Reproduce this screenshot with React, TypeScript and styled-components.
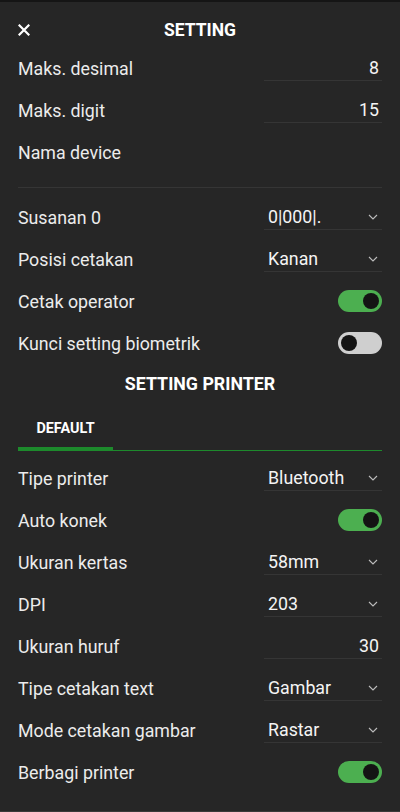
import React from "react";
import styled, { createGlobalStyle } from "styled-components";

const Global = createGlobalStyle`
  html, body { margin: 0; padding: 0; background: #262626; }
  body { font-family: Roboto, "Noto Sans", sans-serif; color: #eeeeee; }
  * { box-sizing: border-box; }
`;

const Screen = styled.div`
  width: 400px;
  height: 812px;
  background: #262626;
  border-top: 2px solid #151515;
  border-bottom: 1px solid #3a3a3a;
  overflow: hidden;
`;

const Header = styled.div`
  height: 45px;
  padding: 10px 18px 0;
  display: grid;
  grid-template-columns: 1fr auto 1fr;
  align-items: center;
`;

const CloseBtn = styled.div`
  display: flex;
  align-items: center;
  justify-self: start;
`;

const Title = styled.div`
  font-size: 17.5px;
  font-weight: 700;
  color: #ffffff;
  text-align: center;
`;

const Body = styled.div`
  padding: 0 18px;
`;

const Row = styled.div`
  height: 42px;
  display: flex;
  align-items: center;
  justify-content: space-between;
`;

const Label = styled.div`
  font-size: 17.8px;
  color: #ececec;
`;

const Field = styled.div`
  width: 118px;
  height: 26px;
  border-bottom: 1px solid #353535;
  display: flex;
  align-items: center;
  justify-content: space-between;
  padding: 0 3px 0 4px;
  font-size: 17.8px;
  color: #f4f4f4;
`;

const NumberValue = styled.div`
  margin-left: auto;
`;

const Chevron = styled.svg`
  width: 10px;
  height: 6px;
  margin-right: 1px;
`;

const NameBlock = styled.div`
  display: flex;
  flex-direction: column;
`;

const NameInput = styled.div`
  height: 15px;
  border-bottom: 1px solid #353535;
`;

const Spacer = styled.div<{ $h: number }>`
  height: ${(p) => p.$h}px;
`;

const Track = styled.div<{ $on: boolean }>`
  width: 44px;
  height: 22px;
  border-radius: 11px;
  background: ${(p) => (p.$on ? "#4caf50" : "#cfcfcf")};
  display: flex;
  align-items: center;
  justify-content: ${(p) => (p.$on ? "flex-end" : "flex-start")};
  padding: 0 3px;
`;

const Thumb = styled.div`
  width: 16px;
  height: 16px;
  border-radius: 50%;
  background: #141414;
`;

const SectionTitle = styled.div`
  height: 38px;
  display: flex;
  align-items: center;
  justify-content: center;
  font-size: 17.8px;
  font-weight: 700;
  color: #ffffff;
`;

const TabBar = styled.div`
  display: flex;
  box-shadow: inset 0 -1px 0 #1d8a2c;
`;

const Tab = styled.div<{ $active?: boolean }>`
  width: 95px;
  padding: 17px 0 8px;
  line-height: 20px;
  text-align: center;
  font-size: 14.4px;
  font-weight: 700;
  color: #ffffff;
  border-bottom: 4px solid ${(p) => (p.$active ? "#1d8a2c" : "transparent")};
`;

const Switch = ({ on }: { on: boolean }) => (
  <Track $on={on}>
    <Thumb />
  </Track>
);

const NumberRow = ({ label, value }: { label: string; value: string }) => (
  <Row>
    <Label>{label}</Label>
    <Field>
      <NumberValue>{value}</NumberValue>
    </Field>
  </Row>
);

const SelectRow = ({ label, value }: { label: string; value: string }) => (
  <Row>
    <Label>{label}</Label>
    <Field>
      <span>{value}</span>
      <Chevron viewBox="0 0 10 6">
        <polyline points="1,1 5,5 9,1" fill="none" stroke="#bdbdbd" strokeWidth="1.1" />
      </Chevron>
    </Field>
  </Row>
);

const SwitchRow = ({ label, on }: { label: string; on: boolean }) => (
  <Row>
    <Label>{label}</Label>
    <Switch on={on} />
  </Row>
);

export default function App() {
  return (
    <>
      <Global />
      <Screen>
        <Header>
          <CloseBtn>
            <svg width="12" height="12" viewBox="0 0 12 12">
              <path d="M1.5 1.5 L10.5 10.5 M10.5 1.5 L1.5 10.5" stroke="#ffffff" strokeWidth="2.2" strokeLinecap="square" />
            </svg>
          </CloseBtn>
          <Title>SETTING</Title>
          <div />
        </Header>
        <Body>
          <NumberRow label="Maks. desimal" value="8" />
          <NumberRow label="Maks. digit" value="15" />
          <NameBlock>
            <Row>
              <Label>Nama device</Label>
            </Row>
            <NameInput />
          </NameBlock>
          <Spacer $h={8} />
          <SelectRow label="Susanan 0" value="0|000|." />
          <SelectRow label="Posisi cetakan" value="Kanan" />
          <SwitchRow label="Cetak operator" on={true} />
          <SwitchRow label="Kunci setting biometrik" on={false} />
          <SectionTitle>SETTING PRINTER</SectionTitle>
          <TabBar>
            <Tab $active>DEFAULT</Tab>
          </TabBar>
          <Spacer $h={6} />
          <SelectRow label="Tipe printer" value="Bluetooth" />
          <SwitchRow label="Auto konek" on={true} />
          <SelectRow label="Ukuran kertas" value="58mm" />
          <SelectRow label="DPI" value="203" />
          <NumberRow label="Ukuran huruf" value="30" />
          <SelectRow label="Tipe cetakan text" value="Gambar" />
          <SelectRow label="Mode cetakan gambar" value="Rastar" />
          <SwitchRow label="Berbagi printer" on={true} />
        </Body>
      </Screen>
    </>
  );
}
